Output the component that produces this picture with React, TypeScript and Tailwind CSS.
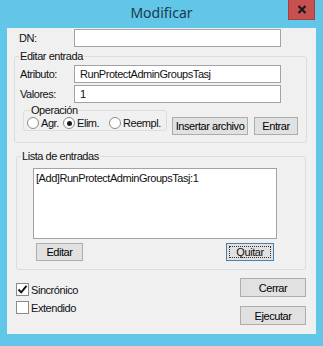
function Btn({ label, className }: { label: string; className?: string }) {
  return (
    <div
      className={
        "flex items-center justify-center bg-[#e1e1e1] border border-[#adadad] text-black " +
        (className ?? "")
      }
    >
      {label}
    </div>
  );
}

function Radio({ label, checked, className }: { label: string; checked?: boolean; className?: string }) {
  return (
    <div className={"flex items-center gap-[2px] " + (className ?? "")}>
      <div className="w-[12px] h-[12px] rounded-full border border-[#8a8a8a] bg-white flex items-center justify-center">
        {checked && <div className="w-[5px] h-[5px] rounded-full bg-[#1a1a1a]" />}
      </div>
      <span>{label}</span>
    </div>
  );
}

function Check({ label, checked }: { label: string; checked?: boolean }) {
  return (
    <div className="flex items-center gap-[2px] h-[13px]">
      <div className="w-[13px] h-[13px] border border-[#8a8a8a] bg-white flex items-center justify-center">
        {checked && (
          <svg width="11" height="11" viewBox="0 0 11 11">
            <path d="M1.5 5.5 L4.2 8.3 L9.5 1.8" fill="none" stroke="#111" strokeWidth="1.9" />
          </svg>
        )}
      </div>
      <span>{label}</span>
    </div>
  );
}

export default function App() {
  return (
    <div className="w-[323px] h-[346px] bg-[#61c6e8] flex flex-col font-['Liberation_Sans',Arial,sans-serif] text-[11px] tracking-[-0.45px] leading-[12px] text-[#111]">
      {/* title bar */}
      <div className="relative h-[28px] flex items-center justify-center">
        <span className="font-['Noto_Sans',sans-serif] text-[14px] tracking-normal text-[#1c3a4c] -mt-[3px]">
          Modificar
        </span>
        <div className="absolute right-[8px] top-0 w-[27px] h-[20px] bg-[#c75050] border border-t-0 border-[#a94040] flex items-center justify-center">
          <svg width="10" height="9" viewBox="0 0 10 9">
            <path d="M1.5 1 L8.5 8 M8.5 1 L1.5 8" stroke="#1a1a1a" strokeWidth="2.2" />
          </svg>
        </div>
      </div>

      {/* client area */}
      <div className="ml-[7px] w-[309px] h-[306px] bg-[#f0f0f0] flex flex-col">
        <div className="mt-[1px] h-[18px] pl-[12px] flex items-center">
          <span className="w-[55px]">DN:</span>
          <div className="w-[207px] h-[18px] bg-white border border-[#a3a3a3]" />
        </div>

        <fieldset className="mt-[3px] ml-[7px] w-[293px] border border-[#dcdcdc] rounded-[3px] flex flex-col">
          <legend className="ml-[4px] px-[1px] h-[12px] leading-[12px]">Editar entrada</legend>
          <div className="mt-[3px] pl-[5px] h-[18px] flex items-center">
            <span className="w-[54px]">Atributo:</span>
            <div className="w-[207px] h-[18px] bg-white border border-[#a3a3a3] pl-[5px] flex items-center">
              RunProtectAdminGroupsTasj
            </div>
          </div>
          <div className="mt-[2px] pl-[5px] h-[18px] flex items-center">
            <span className="w-[54px]">Valores:</span>
            <div className="w-[207px] h-[18px] bg-white border border-[#a3a3a3] pl-[5px] flex items-center">
              1
            </div>
          </div>
          <div className="mt-[1px] mb-[7px] flex items-start">
            <fieldset className="ml-[8px] w-[144px] border border-[#dcdcdc] rounded-[3px]">
              <legend className="ml-[6px] px-[1px] h-[12px] leading-[12px]">Operación</legend>
              <div className="h-[14px] pl-[3px] flex items-center">
                <Radio label="Agr." className="w-[36px]" />
                <Radio label="Elim." checked className="w-[46px]" />
                <Radio label="Reempl." />
              </div>
            </fieldset>
            <Btn label="Insertar archivo" className="mt-[13px] ml-[5px] w-[76px] h-[18px]" />
            <Btn label="Entrar" className="mt-[13px] ml-[6px] w-[44px] h-[18px]" />
          </div>
        </fieldset>

        <fieldset className="mt-[7px] ml-[9px] w-[290px] border border-[#dcdcdc] rounded-[3px] flex flex-col">
          <legend className="ml-[4px] px-[1px] h-[12px] leading-[12px]">Lista de entradas</legend>
          <div className="mt-[6px] ml-[16px] w-[244px] h-[71px] bg-white border border-[#a3a3a3] pt-[3px] pl-[2px]">
            [Add]RunProtectAdminGroupsTasj:1
          </div>
          <div className="mt-[4px] mb-[8px] flex">
            <Btn label="Editar" className="ml-[19px] w-[47px] h-[18px]" />
            <div className="ml-[143px] w-[48px] h-[18px] bg-[#e1e1e1] border border-[#4a7fae] p-[2px]">
              <div className="w-full h-full border border-dotted border-[#333] flex items-center justify-center">
                Quitar
              </div>
            </div>
          </div>
        </fieldset>

        <div className="pl-[9px] pr-[10px] flex justify-between">
          <div className="mt-[13px] flex flex-col gap-[5px]">
            <Check label="Sincrónico" checked />
            <Check label="Extendido" />
          </div>
          <div className="mt-[8px] flex flex-col gap-[9px]">
            <Btn label="Cerrar" className="w-[66px] h-[19px]" />
            <Btn label="Ejecutar" className="w-[66px] h-[19px]" />
          </div>
        </div>
      </div>
    </div>
  );
}
